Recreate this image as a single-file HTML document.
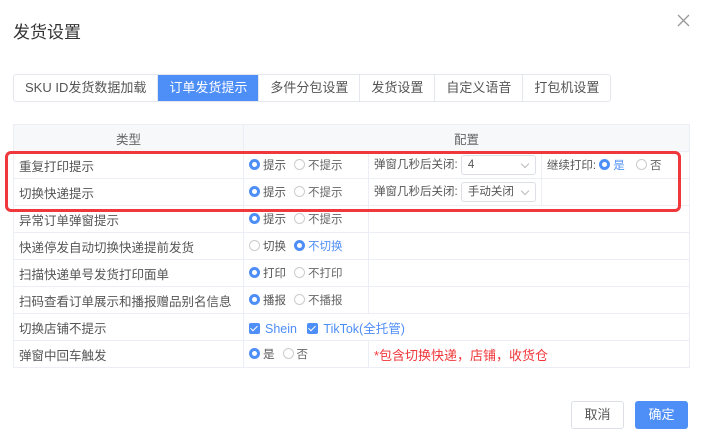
<!DOCTYPE html>
<html><head><meta charset="utf-8"><style>
*{box-sizing:border-box;margin:0;padding:0}
body{width:702px;height:444px;background:#fff;font-family:"Liberation Sans","Noto Sans CJK SC",sans-serif;color:#555;font-size:12px;position:relative;overflow:hidden}
.a{position:absolute}
.title{left:13px;top:18px;font-size:17px;color:#333}
.tabs{left:13px;top:74px;height:28px;display:flex;border:1px solid #e4e7ed;border-radius:3px;overflow:hidden}
.tabs div{padding:0 11px;line-height:26px;font-size:13px;color:#555;border-right:1px solid #e4e7ed}
.tabs div:last-child{border-right:0}
.tabs .on{background:#4e8ef7;color:#fff}
table{position:absolute;left:13px;top:124px;border-collapse:collapse;width:677px}
td{border:1px solid #ebeef5;height:27px;padding:0 5px;font-size:12.5px;color:#555;white-space:nowrap}
tr.h td{background:#f7f8fa;text-align:center;height:27px;color:#666}
.r{display:inline-block;width:11px;height:11px;border:1px solid #ccc;border-radius:50%;vertical-align:-1px;margin-right:3px}
.r.on{border:3px solid #4e8ef7}
.b{color:#4e8ef7}
.o{margin-left:8px;color:#666;font-size:11.5px}
.s{font-size:11.5px;color:#555}
.sel{display:inline-block;border:1px solid #dcdfe6;border-radius:3px;height:20px;line-height:18px;padding:0 6px;font-size:11.5px;vertical-align:middle;position:relative;width:75px}
.sel:after{content:"";position:absolute;right:7px;top:5px;width:5px;height:5px;border-right:1px solid #bbb;border-bottom:1px solid #bbb;transform:rotate(45deg)}
.cb{display:inline-block;width:11px;height:11px;background:#4e8ef7;border-radius:2px;vertical-align:-1px;margin-right:5px;position:relative}
.cb:after{content:"";position:absolute;left:3px;top:1px;width:3px;height:6px;border-right:1.5px solid #fff;border-bottom:1.5px solid #fff;transform:rotate(45deg)}
.red{position:absolute;left:5px;top:151px;width:676px;height:61px;border:3px solid #f0373b;border-radius:6px}
.btn{position:absolute;top:401px;width:53px;height:28px;border-radius:3px;text-align:center;line-height:26px;font-size:13px}
</style></head><body>
<div class="a title">发货设置</div>
<svg class="a" style="left:677px;top:14px" width="13" height="13" viewBox="0 0 13 13"><path d="M1 1L12 12M12 1L1 12" stroke="#999" stroke-width="1.3"/></svg>
<div class="a tabs"><div>SKU ID发货数据加载</div><div class="on">订单发货提示</div><div>多件分包设置</div><div>发货设置</div><div>自定义语音</div><div>打包机设置</div></div>
<table>
<colgroup><col style="width:230px"><col style="width:125px"><col style="width:172px"><col></colgroup>
<tr class="h"><td>类型</td><td colspan="3">配置</td></tr>
<tr><td>重复打印提示</td><td><span class="r on"></span><span class="b s">提示</span><span class="o"><span class="r"></span>不提示</span></td><td class="s">弹窗几秒后关闭: <span class="sel">4</span></td><td class="s">继续打印: <span class="r on"></span><span class="b">是</span> <span class="o"><span class="r"></span>否</span></td></tr>
<tr><td>切换快递提示</td><td><span class="r on"></span><span class="b s">提示</span><span class="o"><span class="r"></span>不提示</span></td><td class="s">弹窗几秒后关闭: <span class="sel">手动关闭</span></td><td></td></tr>
<tr><td>异常订单弹窗提示</td><td><span class="r on"></span><span class="b s">提示</span><span class="o"><span class="r"></span>不提示</span></td><td colspan="2"></td></tr>
<tr><td>快递停发自动切换快递提前发货</td><td><span class="r"></span><span class="s">切换</span><span class="o"><span class="r on"></span><span class="b">不切换</span></span></td><td colspan="2"></td></tr>
<tr><td>扫描快递单号发货打印面单</td><td><span class="r on"></span><span class="b s">打印</span><span class="o"><span class="r"></span>不打印</span></td><td colspan="2"></td></tr>
<tr><td>扫码查看订单展示和播报赠品别名信息</td><td><span class="r on"></span><span class="b s">播报</span><span class="o"><span class="r"></span>不播报</span></td><td colspan="2"></td></tr>
<tr><td>切换店铺不提示</td><td colspan="3"><span class="cb"></span><span class="b">Shein</span> &nbsp; <span class="cb"></span><span class="b">TikTok(全托管)</span></td></tr>
<tr><td>弹窗中回车触发</td><td><span class="r on"></span><span class="b s">是</span><span class="o"><span class="r"></span>否</span></td><td colspan="2" style="color:#f0373b;font-size:13px">*包含切换快递，店铺，收货仓</td></tr>
</table>
<div class="red"></div>
<div class="btn" style="left:571px;border:1px solid #dcdfe6;color:#555">取消</div>
<div class="btn" style="left:635px;background:#4e8ef7;color:#fff;line-height:28px">确定</div>
</body></html>
